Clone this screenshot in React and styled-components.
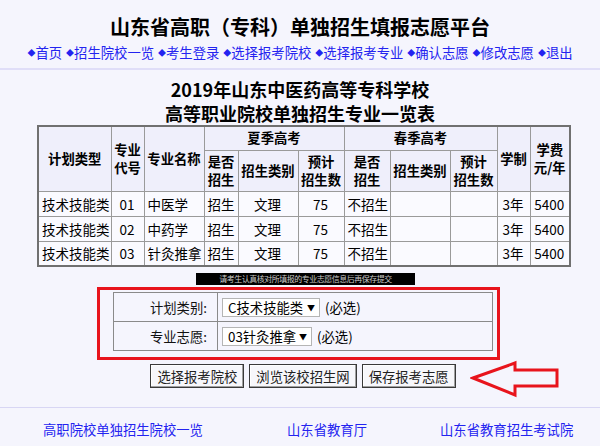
import React from 'react';
import styled, { createGlobalStyle } from 'styled-components';

const GlobalStyle = createGlobalStyle`
  body {
    margin: 0;
    background: #f5f5fd;
    font-family: 'Noto Sans CJK SC', 'Noto Sans', sans-serif;
    font-size: 13.33px;
    color: #000;
  }
`;

const Page = styled.div`
  width: 600px;
  height: 446px;
  overflow: hidden;
`;

const Header = styled.header`
  padding: 16px 0 7px;
  border-bottom: 2px solid #e0def8;
  text-align: center;
`;

const SiteTitle = styled.h1`
  margin: 0 0 7px;
  font-size: 20px;
  line-height: 22px;
  font-weight: 700;
`;

const Nav = styled.nav`
  display: flex;
  justify-content: center;
  gap: 4px;
  line-height: 16px;
`;

const NavLink = styled.a`
  color: #2323f0;
  text-decoration: none;
  white-space: nowrap;
`;

const Bullet = styled.span`
  font-size: 8px;
  vertical-align: 2px;
`;

const Main = styled.main`
  padding-top: 7px;
`;

const SchoolTitle = styled.h2`
  margin: 0;
  font-size: 18px;
  line-height: 24px;
  font-weight: 700;
  text-align: center;
`;

const PlanTable = styled.table`
  margin-left: 37px;
  width: 532px;
  table-layout: fixed;
  border-collapse: collapse;
  border: 2px solid #707070;
`;

const Row = styled.tr`
  height: ${(p) => p.$h}px;
`;

const Th = styled.th`
  padding: 0 1px;
  border: 1px solid #9a9a9a;
  background: #efeffb;
  font-weight: 700;
  line-height: 18px;
  text-align: center;
`;

const Td = styled.td`
  padding: 0 2px 0 ${(p) => (p.$align === 'left' ? 3 : 1)}px;
  border: 1px solid #9a9a9a;
  background: #fafaff;
  font-size: 13.5px;
  line-height: 18px;
  text-align: ${(p) => p.$align || 'center'};
  white-space: nowrap;
`;

const MaskBar = styled.div`
  margin: 6px 0 0 196px;
  width: 219px;
  height: 12px;
  background: #000;
  color: #c8c8c8;
  font-size: 8px;
  line-height: 12px;
  letter-spacing: -0.5px;
  white-space: nowrap;
  text-align: center;
`;

const ChoiceBox = styled.div`
  margin: 2px 0 0 97px;
  width: 403px;
  box-sizing: border-box;
  padding: 2px 4px 6px 13px;
  border: 3px solid #e8141c;
`;

const ChoiceTable = styled.table`
  width: 380px;
  border-collapse: collapse;
  border: 1px solid #777;
`;

const ChoiceRow = styled.tr`
  height: 29px;
`;

const LabelCell = styled.td`
  width: 104px;
  padding: 0 10px 0 0;
  box-sizing: border-box;
  border: 1px solid #8a8a8a;
  text-align: right;
  color: #111;
`;

const FieldCell = styled.td`
  padding: 0 0 0 4px;
  border: 1px solid #8a8a8a;
  white-space: nowrap;
`;

const FakeSelect = styled.span`
  display: inline-flex;
  align-items: center;
  justify-content: space-between;
  box-sizing: border-box;
  width: ${(p) => p.$w}px;
  height: 19px;
  padding: 0 4px 0 5px;
  background: #fff;
  border: 1px solid #b5b5b5;
  vertical-align: middle;
`;

const SelectArrow = styled.span`
  font-size: 8px;
`;

const Hint = styled.span`
  margin-left: 5px;
  vertical-align: middle;
`;

const ButtonRow = styled.div`
  position: relative;
  display: flex;
  justify-content: center;
  gap: 5px;
  padding: 4px 0 0 6px;
`;

const ActionButton = styled.button`
  height: 24px;
  padding: 0 6px;
  background: #f7f7fb;
  border: 1px solid #3a3a3a;
  box-shadow: inset -1px -1px #a0a0a0, inset 1px 1px #fff;
  font-family: inherit;
  font-size: 13.33px;
  color: #222;
`;

const Arrow = styled.svg`
  position: absolute;
  left: 470px;
  top: 0;
`;

const Footer = styled.footer`
  margin-top: 19px;
  border-top: 1px solid #d8d6f4;
  padding: 14px 0 0 43px;
  display: grid;
  grid-template-columns: 244px 153px auto;
  line-height: 16px;
`;

const FooterLink = styled.a`
  color: #2323f0;
  text-decoration: none;
  white-space: nowrap;
`;

const navItems = ['首页', '招生院校一览', '考生登录', '选择报考院校', '选择报考专业', '确认志愿', '修改志愿', '退出'];

const widths = [73, 33, 60, 34, 60, 46, 46, 60, 47, 33, 40];

const rows = [
  ['01', '中医学'],
  ['02', '中药学'],
  ['03', '针灸推拿'],
];

const App = () => (
  <Page>
    <GlobalStyle />
    <Header>
      <SiteTitle>山东省高职（专科）单独招生填报志愿平台</SiteTitle>
      <Nav>
        {navItems.map((item) => (
          <NavLink key={item} href="#">
            <Bullet>◆</Bullet>
            {item}
          </NavLink>
        ))}
      </Nav>
    </Header>
    <Main>
      <SchoolTitle>
        2019年山东中医药高等专科学校
        <br />
        高等职业院校单独招生专业一览表
      </SchoolTitle>
      <PlanTable>
        <colgroup>
          {widths.map((w, i) => (
            <col key={i} style={{ width: w }} />
          ))}
        </colgroup>
        <thead>
          <Row $h={24}>
            <Th rowSpan={2}>计划类型</Th>
            <Th rowSpan={2}>专业<br />代号</Th>
            <Th rowSpan={2}>专业名称</Th>
            <Th colSpan={3}>夏季高考</Th>
            <Th colSpan={3}>春季高考</Th>
            <Th rowSpan={2}>学制</Th>
            <Th rowSpan={2}>学费<br />元/年</Th>
          </Row>
          <Row $h={41}>
            <Th>是否<br />招生</Th>
            <Th>招生类别</Th>
            <Th>预计<br />招生数</Th>
            <Th>是否<br />招生</Th>
            <Th>招生类别</Th>
            <Th>预计<br />招生数</Th>
          </Row>
        </thead>
        <tbody>
          {rows.map(([code, name]) => (
            <Row $h={25} key={code}>
              <Td $align="left">技术技能类</Td>
              <Td>{code}</Td>
              <Td $align="left">{name}</Td>
              <Td $align="left">招生</Td>
              <Td>文理</Td>
              <Td>75</Td>
              <Td $align="left">不招生</Td>
              <Td />
              <Td />
              <Td>3年</Td>
              <Td>5400</Td>
            </Row>
          ))}
        </tbody>
      </PlanTable>
      <MaskBar>请考生认真核对所填报的专业志愿信息后再保存提交</MaskBar>
      <ChoiceBox>
        <ChoiceTable>
          <tbody>
            <ChoiceRow>
              <LabelCell>计划类别:</LabelCell>
              <FieldCell>
                <FakeSelect $w={98}>
                  C技术技能类<SelectArrow>▼</SelectArrow>
                </FakeSelect>
                <Hint>(必选)</Hint>
              </FieldCell>
            </ChoiceRow>
            <ChoiceRow>
              <LabelCell>专业志愿:</LabelCell>
              <FieldCell>
                <FakeSelect $w={90}>
                  03针灸推拿<SelectArrow>▼</SelectArrow>
                </FakeSelect>
                <Hint>(必选)</Hint>
              </FieldCell>
            </ChoiceRow>
          </tbody>
        </ChoiceTable>
      </ChoiceBox>
      <ButtonRow>
        <ActionButton>选择报考院校</ActionButton>
        <ActionButton>浏览该校招生网</ActionButton>
        <ActionButton>保存报考志愿</ActionButton>
        <Arrow width="92" height="40" viewBox="0 0 92 40">
          <polygon
            points="3,18 45,3 45,10 87,10 87,26 45,26 45,35"
            fill="none"
            stroke="#e8141c"
            strokeWidth="3"
            strokeLinejoin="miter"
          />
        </Arrow>
      </ButtonRow>
    </Main>
    <Footer>
      <FooterLink href="#">高职院校单独招生院校一览</FooterLink>
      <FooterLink href="#">山东省教育厅</FooterLink>
      <FooterLink href="#">山东省教育招生考试院</FooterLink>
    </Footer>
  </Page>
);

export default App;
